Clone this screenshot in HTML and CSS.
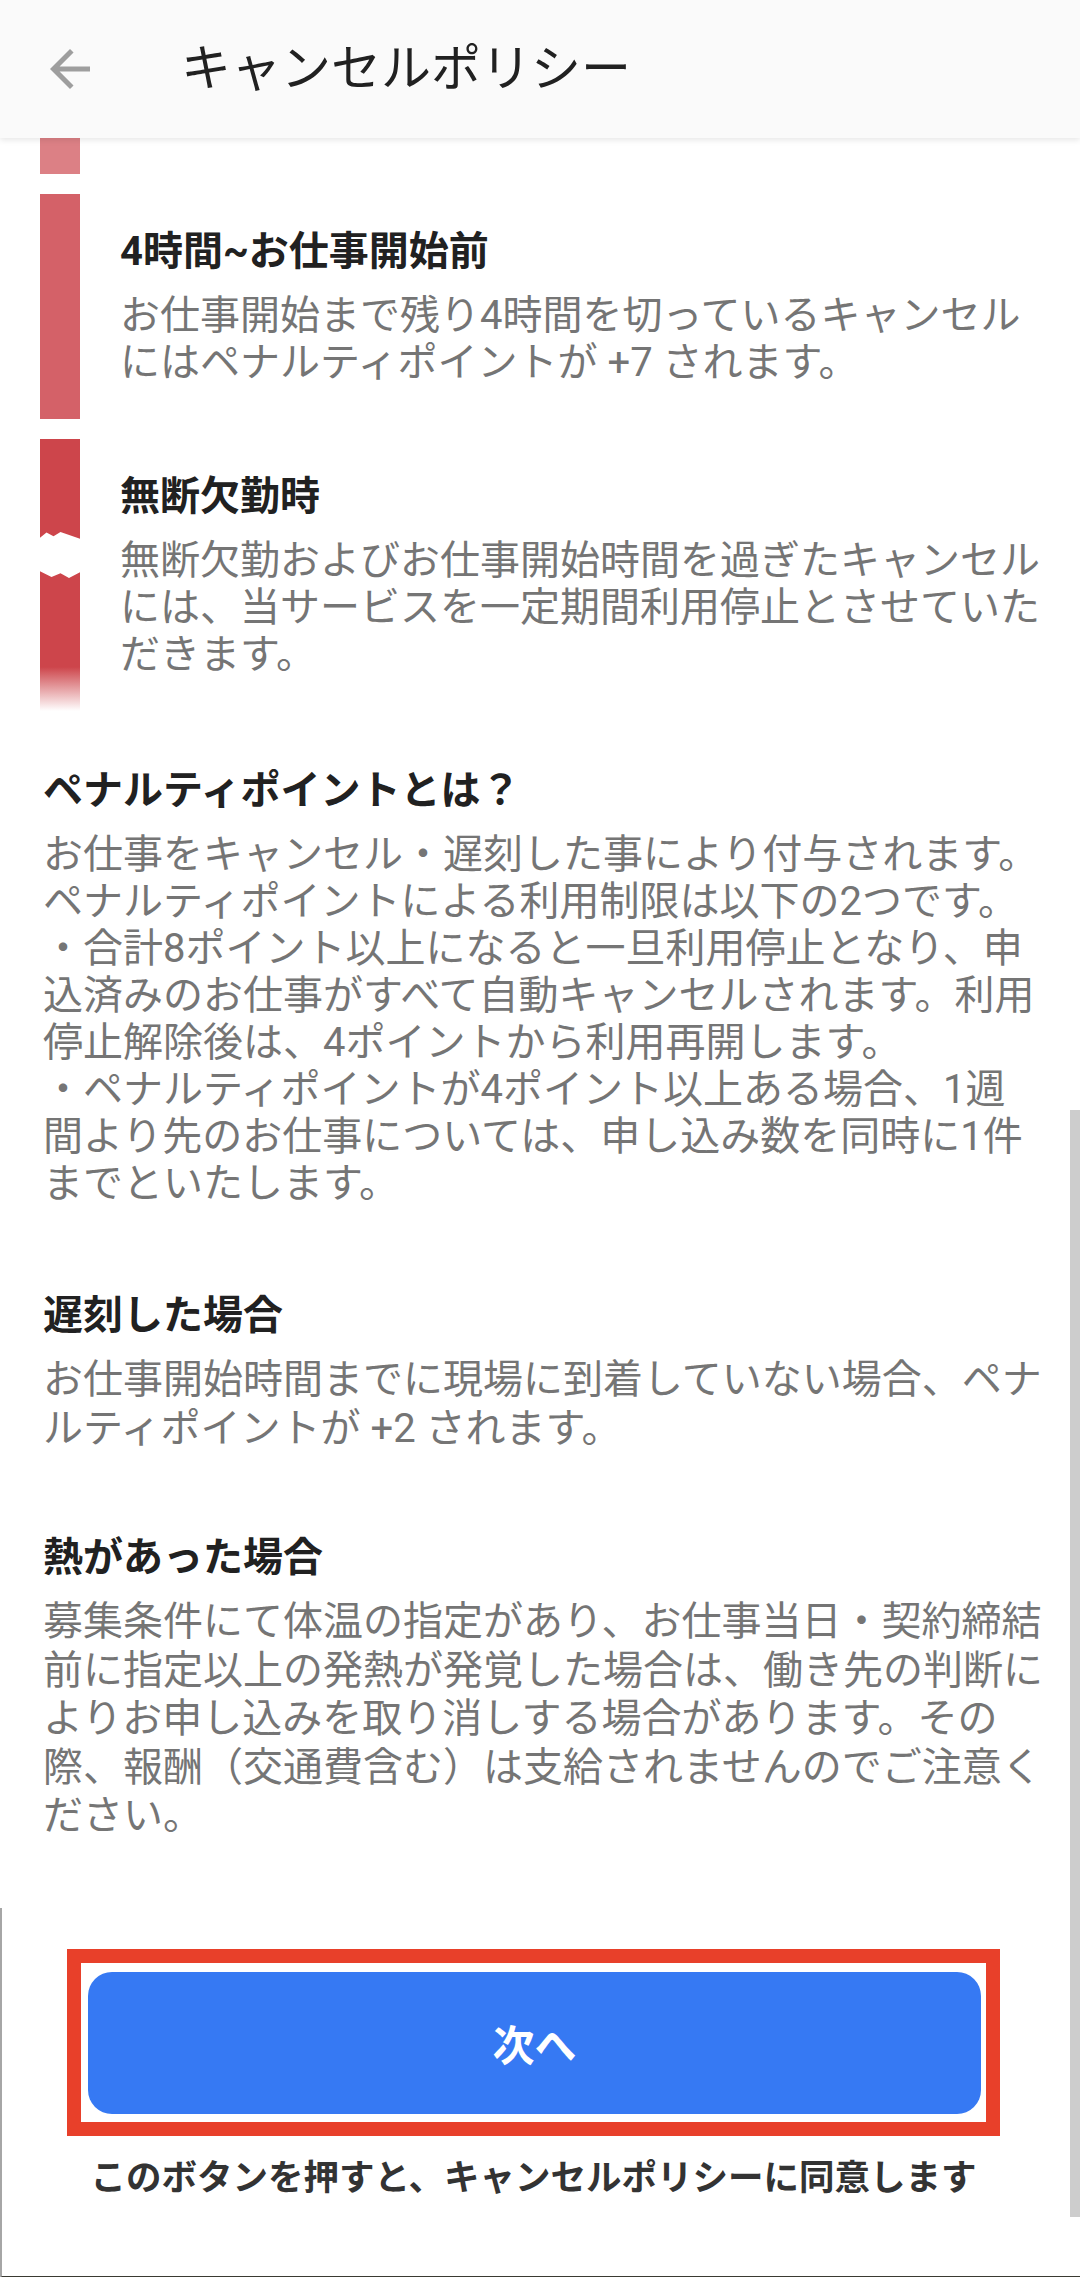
FILE: index.html
```html
<!DOCTYPE html>
<html lang="ja">
<head>
<meta charset="utf-8">
<title>キャンセルポリシー</title>
<link rel="stylesheet" href="styles.css">
</head>
<body>
<div class="page">
  <header class="appbar">
    <svg class="back" viewBox="0 0 24 24" aria-hidden="true"><path d="M20 11H7.83l5.59-5.59L12 4l-8 8 8 8 1.41-1.41L7.83 13H20v-2z"/></svg>
    <h1 class="title">キャンセルポリシー</h1>
  </header>

  <main class="content">
    <div class="timeline">
      <div class="tl-stub"><div class="bar bar-1"></div></div>

      <div class="tl-item">
        <div class="bar bar-2"></div>
        <div class="tl-body">
          <h2 class="heading">4時間~お仕事開始前</h2>
          <p class="text">お仕事開始まで残り4時間を切っているキャンセルにはペナルティポイントが +7 されます。</p>
        </div>
      </div>

      <div class="tl-item">
        <div class="bar bar-3">
          <svg class="tear" viewBox="0 0 40 50" preserveAspectRatio="none" aria-hidden="true"><polygon points="0,6 6.5,0.5 13.5,4.5 20.5,0 40,7 40,42 29,48 20.5,43 11.5,47 0,41"/></svg>
        </div>
        <div class="tl-body">
          <h2 class="heading">無断欠勤時</h2>
          <p class="text">無断欠勤およびお仕事開始時間を過ぎたキャンセルには、当サービスを一定期間利用停止とさせていただきます。</p>
        </div>
      </div>
    </div>

    <section class="section section-penalty">
      <h2 class="heading">ペナルティポイントとは？</h2>
      <p class="text">お仕事をキャンセル・遅刻した事により付与されます。<br>ペナルティポイントによる利用制限は以下の2つです。<br>・合計8ポイント以上になると一旦利用停止となり、申込済みのお仕事がすべて自動キャンセルされます。利用停止解除後は、4ポイントから利用再開します。<br>・ペナルティポイントが4ポイント以上ある場合、1週間より先のお仕事については、申し込み数を同時に1件までといたします。</p>
    </section>

    <section class="section section-late">
      <h2 class="heading">遅刻した場合</h2>
      <p class="text text-loose">お仕事開始時間までに現場に到着していない場合、ペナルティポイントが +2 されます。</p>
    </section>

    <section class="section section-fever">
      <h2 class="heading">熱があった場合</h2>
      <p class="text text-loose">募集条件にて体温の指定があり、お仕事当日・契約締結前に指定以上の発熱が発覚した場合は、働き先の判断によりお申し込みを取り消しする場合があります。その際、報酬（交通費含む）は支給されませんのでご注意ください。</p>
    </section>
  </main>

  <footer class="footer">
    <div class="highlight">
      <button class="next-btn" type="button">次へ</button>
    </div>
    <p class="agree">このボタンを押すと、キャンセルポリシーに同意します</p>
  </footer>

  <div class="scrollbar" aria-hidden="true"></div>
</div>
</body>
</html>
```

FILE: styles.css
```css
html, body {
  margin: 0;
  padding: 0;
  background: #ffffff;
}

body {
  width: 1080px;
  height: 2277px;
  overflow: hidden;
  font-family: Roboto, "Noto Sans CJK JP", "Noto Sans", sans-serif;
  text-spacing-trim: space-all;
}

.page {
  position: relative;
  width: 1080px;
  height: 2277px;
  display: flex;
  flex-direction: column;
}

/* ---------- app bar ---------- */
.appbar {
  position: relative;
  z-index: 2;
  height: 138px;
  flex: none;
  display: flex;
  align-items: center;
  padding-left: 40px;
  background: #fafafa;
  box-shadow: 0 2px 6px rgba(0, 0, 0, 0.10);
}

.back {
  width: 60px;
  height: 60px;
  fill: #9e9e9e;
  flex: none;
}

.title {
  margin: 0 0 0 81px;
  font-size: 50px;
  font-weight: 400;
  line-height: 60px;
  color: #212121;
}

/* ---------- content ---------- */
.content {
  flex: none;
  padding-bottom: 67px;
}

.heading {
  margin: 0 0 14px;
  font-size: 40px;
  font-weight: 700;
  line-height: 52px;
  color: #212121;
}

.text {
  margin: 0;
  font-size: 40px;
  font-weight: 400;
  line-height: 47px;
  color: #757575;
  line-break: strict;
}

.text-loose {
  line-height: 48.5px;
}

/* timeline */
.timeline {
  display: flex;
  flex-direction: column;
  gap: 20px;
  padding-left: 40px;
}

.tl-stub {
  height: 36px;
  display: flex;
}

.tl-item {
  display: flex;
  gap: 40px;
  padding-right: 35px;
}

.bar {
  position: relative;
  width: 40px;
  flex: none;
}

.bar-1 {
  height: 36px;
  background: #dc8085;
}

.bar-2 {
  background: #d46168;
}

.bar-3 {
  background: linear-gradient(to bottom, #cd454b 0, #cd454b 228px, rgba(205, 69, 75, 0) 272px);
}

.tear {
  position: absolute;
  left: 0;
  top: 93px;
  width: 40px;
  height: 48px;
  fill: #ffffff;
  display: block;
}

.tl-body {
  flex: 1;
  padding: 32px 0 33px;
}

/* sections */
.section {
  padding: 0 35px 0 43px;
}

.section-penalty { margin-top: 54px; }
.section-late { margin-top: 83px; }
.section-fever { margin-top: 79px; }

/* ---------- footer ---------- */
.footer {
  flex: none;
  height: 370px;
  box-sizing: border-box;
  padding: 41px 80px 0 65px;
  border-left: 2px solid #a6a6a6;
  border-bottom: 2px solid #3a3a32;
  background: #ffffff;
}

.highlight {
  border: 14px solid #e8402a;
  padding: 9px 5px 8px 7px;
  background: #ffffff;
}

.next-btn {
  display: block;
  width: 100%;
  height: 142px;
  border: none;
  border-radius: 24px;
  background: #3679f3;
  color: #ffffff;
  font-family: Roboto, "Noto Sans CJK JP", "Noto Sans", sans-serif;
  font-size: 42px;
  font-weight: 700;
  cursor: pointer;
}

.agree {
  margin: 18px 0 0;
  text-align: center;
  font-size: 35.5px;
  font-weight: 700;
  line-height: 48px;
  color: #333333;
  white-space: nowrap;
}

/* overlay scrollbar */
.scrollbar {
  position: absolute;
  right: 0;
  top: 1110px;
  width: 10px;
  height: 1107px;
  background: #cdcdcd;
}
```
